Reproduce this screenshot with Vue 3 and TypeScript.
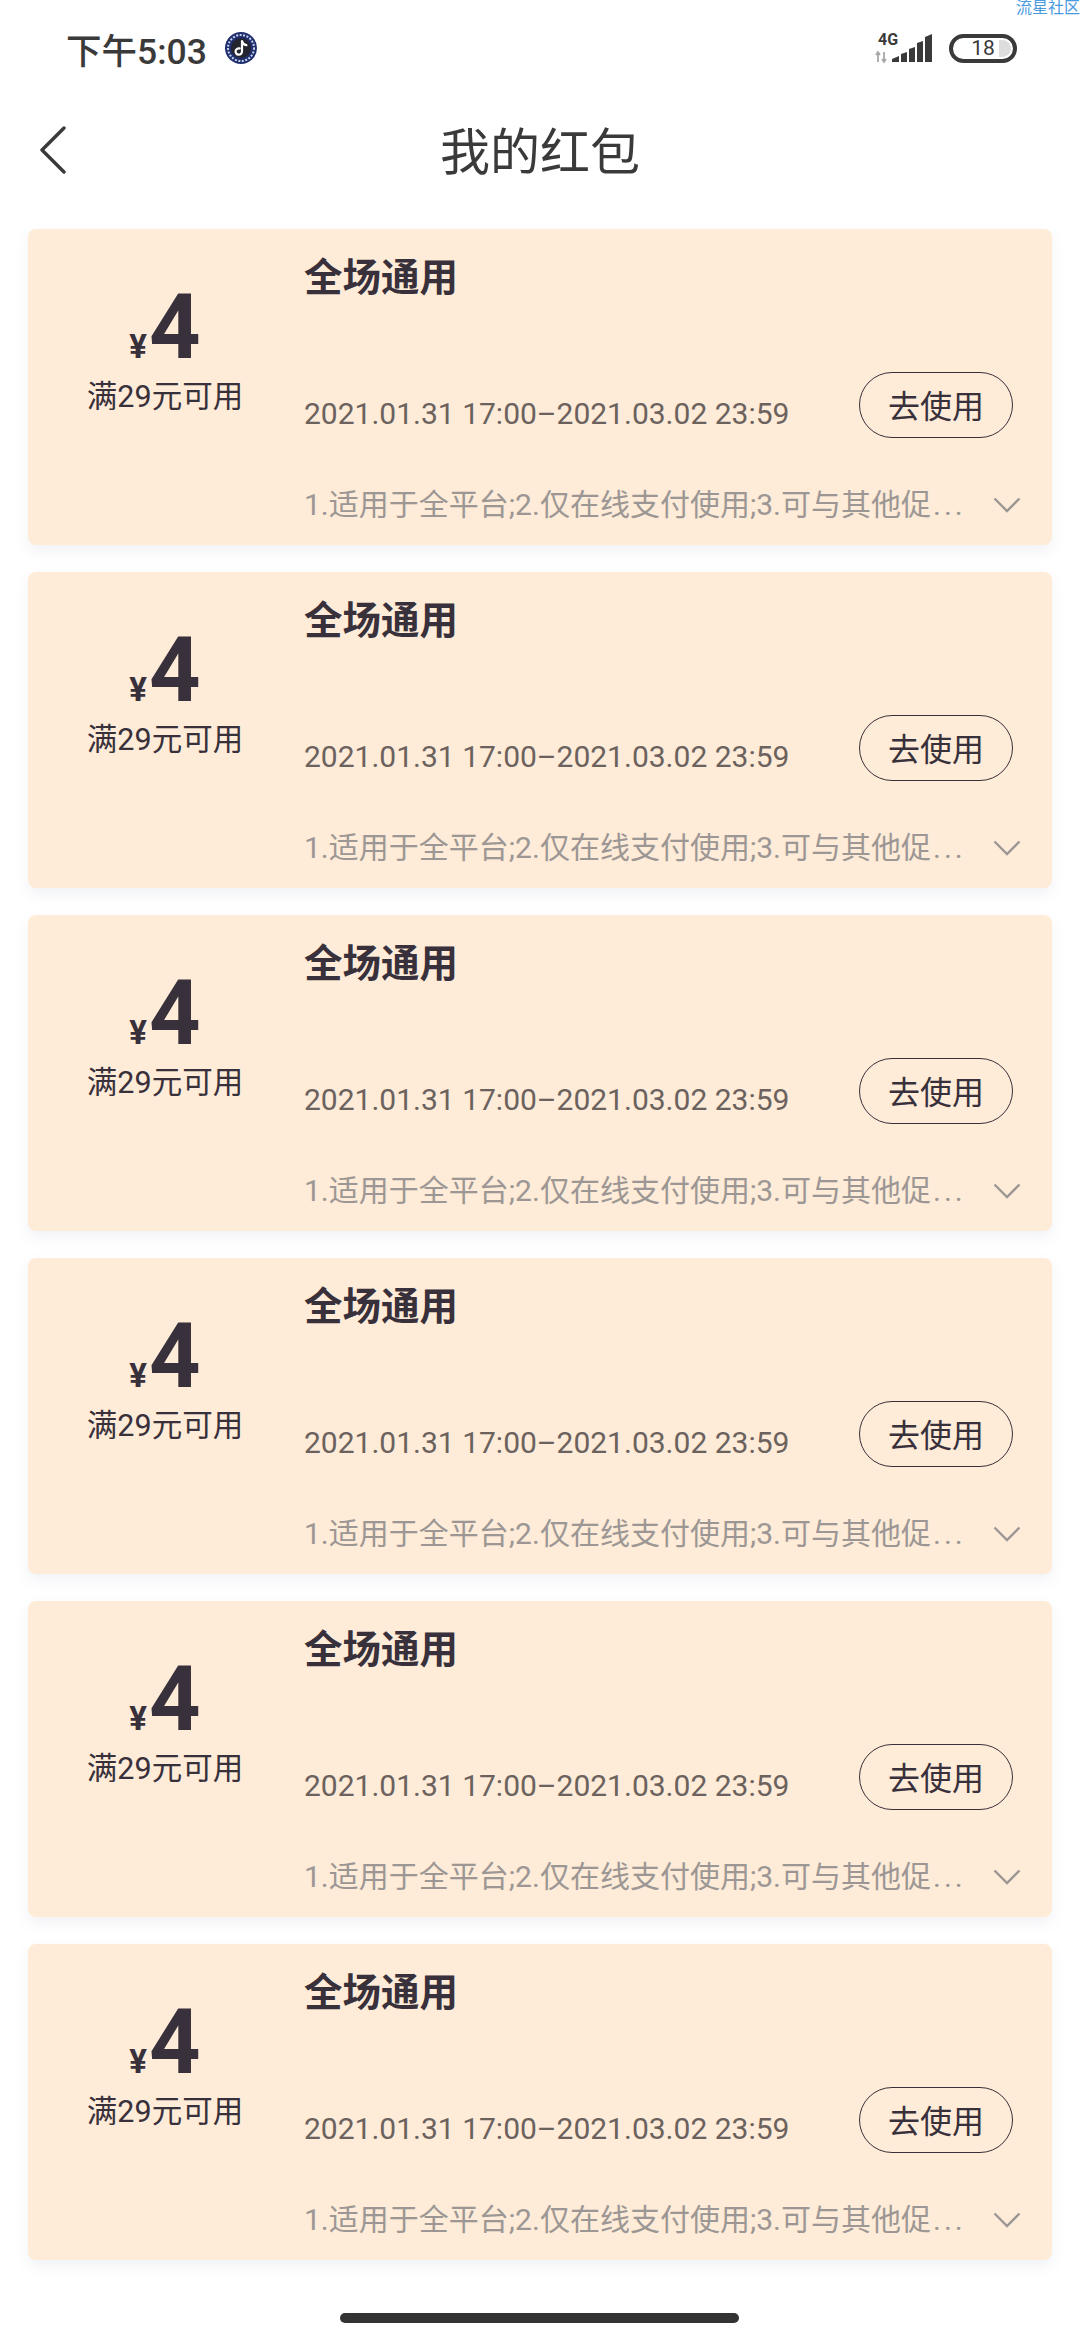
<script setup lang="ts">
interface Coupon {
  id: number
  amount: number
  limit: string
  title: string
  period: string
  note: string
}

const coupons: Coupon[] = [1, 2, 3, 4, 5, 6].map((id) => ({
  id,
  amount: 4,
  limit: '满29元可用',
  title: '全场通用',
  period: '2021.01.31 17:00–2021.03.02 23:59',
  note: '1.适用于全平台;2.仅在线支付使用;3.可与其他促',
}))
</script>

<template>
  <div class="page">
    <span class="watermark">流星社区</span>

    <header class="status-bar">
      <div class="status-left">
        <span class="time">下午5:03</span>
        <svg class="app-icon" viewBox="0 0 32 32" width="32" height="32">
          <circle cx="16" cy="16" r="16" fill="#1f2f6e" />
          <circle cx="16" cy="16" r="13" fill="none" stroke="#c8d0ea" stroke-width="2" stroke-dasharray="2 1.5" />
          <circle cx="16" cy="16" r="10" fill="#24242e" />
          <path d="M17 9v10.500a3.200 3.200 0 1 1-2.400-3.100M17 9c.6 2.600 2.200 3.800 4.400 4.200" fill="none" stroke="#fff" stroke-width="2.200" stroke-linecap="round" />
        </svg>
      </div>
      <div class="status-right">
        <svg class="signal" viewBox="0 -8 58 48" width="58" height="48">
          <text x="3" y="13" class="signal-text">4G</text>
          <path d="M3 20v10M1 23l2-3 2 3M9 30V20M7 27l2 3 2-3" fill="none" stroke="#a8a8a8" stroke-width="1.800" />
          <path d="M17 30v-3l7-3v6zM26 30v-8l6-2v10zM34 30V17l6-2v15zM42 30V11l6-2v21zM50 30V5l7-3v28z" fill="#3a3a3a" />
        </svg>
        <div class="battery">
          <span class="battery-level"></span>
          <span class="battery-num">18</span>
        </div>
      </div>
    </header>

    <nav class="nav-bar">
      <svg class="back" viewBox="0 0 26 48" width="26" height="48">
        <path d="M24 2 2 24l22 22" fill="none" stroke="#3a3a3a" stroke-width="3.400" stroke-linecap="round" stroke-linejoin="round" />
      </svg>
      <h1 class="nav-title">我的红包</h1>
    </nav>

    <main class="list">
      <section v-for="item in coupons" :key="item.id" class="card">
        <div class="card-left">
          <div class="price">
            <span class="yen">¥</span><span class="amount">{{ item.amount }}</span>
          </div>
          <div class="limit">{{ item.limit }}</div>
        </div>
        <div class="card-right">
          <h2 class="card-title">{{ item.title }}</h2>
          <div class="period-row">
            <span class="period">{{ item.period }}</span>
            <button class="use-btn">去使用</button>
          </div>
          <div class="note-row">
            <span class="note">{{ item.note }}<span class="dots">...</span></span>
            <svg class="arrow" viewBox="0 0 28 16" width="28" height="16">
              <path d="M1.500 1.500 14 14 26.500 1.500" fill="none" stroke="#9c9794" stroke-width="2.400" />
            </svg>
          </div>
        </div>
      </section>
    </main>

    <div class="home-bar"></div>
  </div>
</template>

<style>
html,
body {
  margin: 0;
  background: #fff;
}
</style>

<style scoped>
.page {
  position: relative;
  width: 1080px;
  height: 2340px;
  overflow: hidden;
  background: #fff;
  font-family: Roboto, "Noto Sans CJK SC", sans-serif;
  color: #38303a;
}

.watermark {
  position: absolute;
  top: 0;
  right: 0;
  font-size: 16px;
  line-height: 16px;
  color: #4a9ae0;
}

.status-bar {
  display: flex;
  justify-content: space-between;
  align-items: center;
  height: 96px;
  padding: 0 63px 0 66px;
  box-sizing: border-box;
}

.status-left {
  display: flex;
  align-items: center;
  gap: 18px;
}

.time {
  font-size: 35.500px;
  font-weight: 500;
  color: #3a3a3a;
}

.status-right {
  display: flex;
  align-items: center;
  gap: 16px;
}

.signal-text {
  font-size: 16px;
  font-weight: 700;
  fill: #3a3a3a;
}

.battery {
  position: relative;
  display: flex;
  justify-content: center;
  align-items: center;
  width: 68px;
  height: 29px;
  box-sizing: border-box;
  border: 4px solid #3a3a3a;
  border-radius: 15px;
}

.battery-level {
  position: absolute;
  top: 2px;
  right: 2px;
  bottom: 2px;
  width: 12px;
  background: #ddd;
  border-radius: 0 9px 9px 0;
}

.battery-num {
  position: relative;
  font-size: 21px;
  line-height: 21px;
  color: #3a3a3a;
}

.nav-bar {
  position: relative;
  display: flex;
  justify-content: center;
  align-items: center;
  height: 104px;
}

.back {
  position: absolute;
  left: 40px;
  top: 30px;
}

.nav-title {
  margin: 0;
  font-size: 50px;
  font-weight: 400;
  color: #3a3a3a;
}

.list {
  display: flex;
  flex-direction: column;
  gap: 27px;
  padding: 29px 28px 0;
}

.card {
  display: flex;
  height: 316px;
  background: #feebd8;
  border-radius: 8px;
  box-shadow: 0 6px 14px rgba(120, 130, 160, 0.1);
}

.card-left {
  display: flex;
  flex-direction: column;
  align-items: center;
  width: 274px;
  padding-top: 57px;
  box-sizing: border-box;
}

.price {
  display: flex;
  align-items: baseline;
  height: 84px;
}

.yen {
  font-size: 33px;
  font-weight: 700;
  margin-right: 2px;
}

.amount {
  font-size: 90px;
  line-height: 84px;
  font-weight: 700;
}

.limit {
  margin-top: 5px;
  font-size: 30.500px;
  line-height: 44px;
  color: #38303a;
}

.card-right {
  flex: 1;
  display: flex;
  flex-direction: column;
  min-width: 0;
  padding: 0 39px 0 2px;
}

.card-title {
  margin: 24px 0 0;
  font-size: 38.500px;
  line-height: 50px;
  font-weight: 700;
}

.period-row {
  display: flex;
  justify-content: space-between;
  align-items: center;
  margin-top: 69px;
  height: 66px;
}

.period {
  position: relative;
  top: 8px;
  font-size: 30px;
  color: #6b625e;
}

.use-btn {
  width: 154px;
  height: 66px;
  padding: 0 0 2px;
  background: transparent;
  border: 1.500px solid #38303a;
  border-radius: 33px;
  font-family: inherit;
  font-size: 32px;
  color: #38303a;
}

.note-row {
  display: flex;
  align-items: center;
  justify-content: space-between;
  margin-top: 45px;
  height: 44px;
}

.note {
  white-space: nowrap;
  font-size: 30px;
  line-height: 44px;
  color: #9c9794;
}

.dots {
  margin-left: 2px;
  letter-spacing: 3px;
}

.arrow {
  margin-right: -8px;
}

.home-bar {
  position: absolute;
  left: 340px;
  top: 2313px;
  width: 399px;
  height: 10px;
  background: #333;
  border-radius: 5px;
}
</style>
